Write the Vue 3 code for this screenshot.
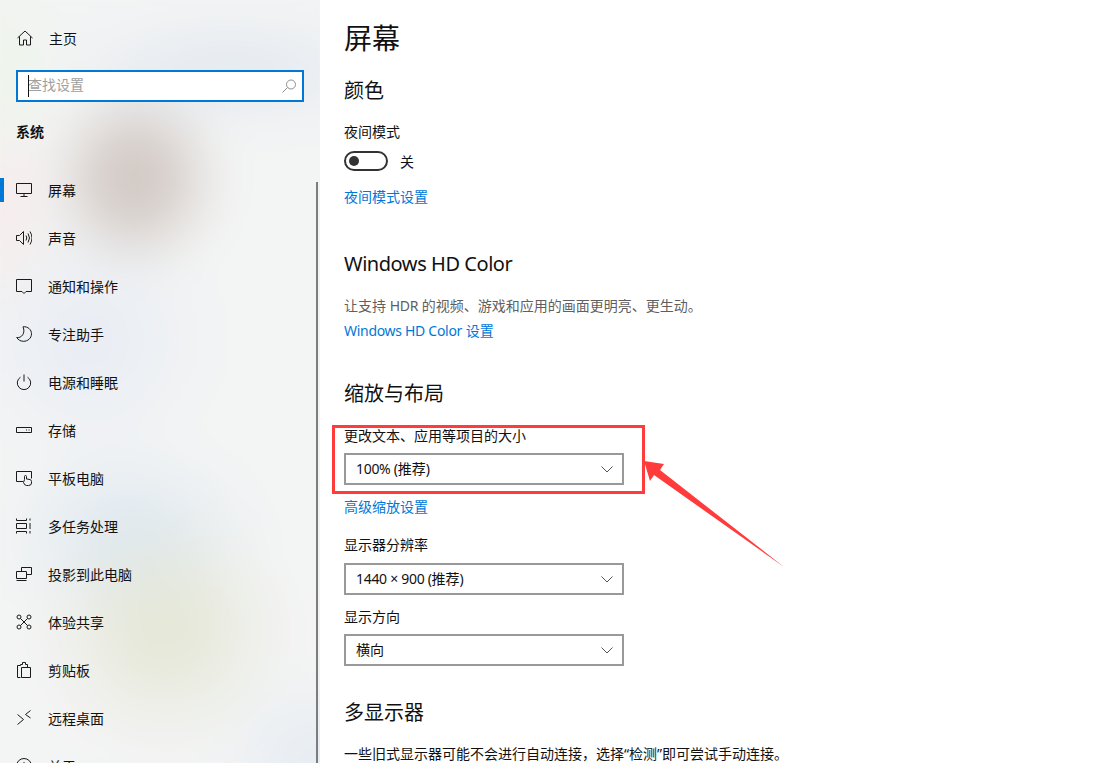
<script setup>
const navItems = [
  { label: '屏幕', active: true, paths: ['M.5 1.5h15v10H.5z', 'M8 11.5v3', 'M4.5 14.5h7'] },
  { label: '声音', paths: ['M.5 5.5h3l4-4v13l-4-4h-3z', 'M10 5.5q1.6 2.5 0 5', 'M12 3.5q3 4.5 0 9', 'M14 1.5q4 6.5 0 13'] },
  { label: '通知和操作', paths: ['M.5 1.5h15v12h-5.5l-2 2-2-2H.5z'] },
  { label: '专注助手', paths: ['M7 .8c5-.6 8.5 3 8.5 7 0 4.5-3.8 7.5-8 7.5-3 0-5.3-1.400-6.800-3.800C5.500 12.500 9.800 7 7 .8z'] },
  { label: '电源和睡眠', paths: ['M8 .5v7', 'M4.500 3.200a6.700 6.700 0 1 0 7 0'] },
  { label: '存储', paths: ['M.5 5.500h15v5H.5z', 'M10 8h1', 'M12.500 8h1'] },
  { label: '平板电脑', paths: ['M7 11.500H.5v-10h15v7', 'M8.500 9.500V6.500q0-1 1-1t1 1v2.500l3.500.5q1.500.5 1.500 2v1.500q0 2.500-3 2.500h-2q-2 0-3-3z'] },
  { label: '多任务处理', paths: ['M.5.5v2h10v-2', 'M.5 15.500v-2h10v2', 'M.5 5.500h10v5H.5z', 'M14 .5v2', 'M14 5v6', 'M14 13v2.500'] },
  { label: '投影到此电脑', paths: ['M5.500 5V1.500h10v7h-5', 'M.5 5.500h10v7H.5z', 'M.5 14.500h10'] },
  { label: '体验共享', paths: ['M4.500 4.500l7 7', 'M11.500 4.500l-7 7', 'M3 1a2 2 0 1 0 0 4 2 2 0 0 0 0-4z', 'M13 1a2 2 0 1 0 0 4 2 2 0 0 0 0-4z', 'M3 11a2 2 0 1 0 0 4 2 2 0 0 0 0-4z', 'M13 11a2 2 0 1 0 0 4 2 2 0 0 0 0-4z'] },
  { label: '剪贴板', paths: ['M4.500 15.500h-3v-12h3', 'M4.500 3.500v-1h2v-2h3v2h2v3', 'M5.500 5.500h9v10h-9z'] },
  { label: '远程桌面', paths: ['M1.500 4.500l6 5-6 5', 'M14.500.5l-5 4 5 3.500'] },
  { label: '关于', paths: ['M8 .5a7.500 7.500 0 1 0 0 15 7.500 7.500 0 0 0 0-15z', 'M8 7v5', 'M8 4v1.500'] }
]
</script>

<template>
  <div class="page">
    <aside class="sidebar">
      <div class="backdrop"></div>
      <div class="home">
        <svg class="icon" viewBox="0 0 16 16"><path d="M.5 8L8 1l7.500 7M2.500 6.500v8.500h4v-5h3v5h4V6.500" /></svg>
        <span>主页</span>
      </div>
      <div class="search">
        <span class="caret"></span>
        <span class="placeholder">查找设置</span>
        <svg class="search-icon" viewBox="0 0 14 14"><path d="M13.500 5.500a4.500 4.500 0 1 1-9 0 4.500 4.500 0 0 1 9 0zM5.500 8.500L.5 13.500" /></svg>
      </div>
      <div class="group">系统</div>
      <nav class="nav">
        <div v-for="item in navItems" :key="item.label" class="nav-item">
          <span v-if="item.active" class="indicator"></span>
          <svg class="icon" viewBox="0 0 16 16"><path v-for="d in item.paths" :key="d" :d="d" /></svg>
          <span>{{ item.label }}</span>
        </div>
      </nav>
      <div class="scrollbar"></div>
    </aside>

    <main class="content">
      <h1>屏幕</h1>
      <h2 class="color-title">颜色</h2>
      <div class="text night-label">夜间模式</div>
      <div class="toggle-row">
        <span class="toggle"><span class="knob"></span></span>
        <span class="text">关</span>
      </div>
      <a class="link night-link">夜间模式设置</a>
      <h2 class="hd-title">Windows HD Color</h2>
      <div class="text muted hd-desc">让支持 <span class="tight">HDR</span> 的视频、游戏和应用的画面更明亮、更生动。</div>
      <a class="link hd-link"><span class="tight">Windows HD Color</span> 设置</a>
      <h2 class="scale-title">缩放与布局</h2>
      <div class="text scale-label">更改文本、应用等项目的大小</div>
      <div class="select first-select">
        <span class="value"><span class="tight">100% (</span>推荐<span class="tight">)</span></span>
        <svg class="chevron" viewBox="0 0 12 7"><path d="M.5.5L6 6l5.500-5.500" /></svg>
      </div>
      <a class="link scale-link">高级缩放设置</a>
      <div class="text res-label">显示器分辨率</div>
      <div class="select res-select">
        <span class="value"><span class="tight">1440 × 900 (</span>推荐<span class="tight">)</span></span>
        <svg class="chevron" viewBox="0 0 12 7"><path d="M.5.5L6 6l5.500-5.500" /></svg>
      </div>
      <div class="text dir-label">显示方向</div>
      <div class="select dir-select">
        <span class="value">横向</span>
        <svg class="chevron" viewBox="0 0 12 7"><path d="M.5.5L6 6l5.500-5.500" /></svg>
      </div>
      <h2 class="multi-title">多显示器</h2>
      <div class="text multi-desc">一些旧式显示器可能不会进行自动连接，选择“检测”即可尝试手动连接。</div>
    </main>

    <div class="mark-box"></div>
    <svg class="mark-arrow" viewBox="0 0 1094 763"><polygon points="644,461 664,464 660,470 784,567 654,475 650,481" /></svg>
  </div>
</template>

<style>
html, body { margin: 0; background: #fff; }
</style>

<style scoped>
.page {
  position: relative;
  display: flex;
  width: 1094px;
  height: 763px;
  overflow: hidden;
  background: #fff;
  color: #111;
  font-family: "Noto Sans", "Noto Sans CJK SC", sans-serif;
  font-size: 14px;
}
.sidebar {
  position: relative;
  flex: 0 0 320px;
  box-sizing: border-box;
  height: 763px;
  padding-top: 14px;
  overflow: hidden;
  background: #f3f4f4;
}
.backdrop {
  position: absolute;
  inset: -60px;
  filter: blur(26px);
  background:
    radial-gradient(ellipse 82px 88px at 195px 238px, #d2c9c4 0, #d2c9c4 45%, rgba(210,201,196,0) 100%),
    radial-gradient(ellipse 125px 120px at 225px 690px, #e2e4d0 0, rgba(226,228,208,0) 100%),
    radial-gradient(ellipse 130px 90px at 190px 595px, #dae6f0 0, rgba(218,230,240,0) 100%),
    radial-gradient(ellipse 190px 55px at 290px 130px, #dfe6ef 0, rgba(223,230,239,0) 100%),
    radial-gradient(ellipse 60px 90px at 60px 130px, #ecf5e6 0, rgba(236,245,230,0) 100%),
    radial-gradient(ellipse 55px 110px at 60px 270px, #f7e9e8 0, rgba(247,233,232,0) 100%),
    radial-gradient(ellipse 130px 130px at 150px 400px, #e7ecf4 0, rgba(231,236,244,0) 100%),
    radial-gradient(ellipse 110px 90px at 380px 823px, #e3eaf3 0, rgba(227,234,243,0) 100%),
    #f3f4f4;
}
.home, .search, .group, .nav, .scrollbar { z-index: 1; }
.home, .group, .nav { position: relative; }
.icon {
  flex: none;
  width: 16px;
  height: 16px;
  fill: none;
  stroke: #1a1a1a;
  stroke-width: 1;
}
.home {
  display: flex;
  align-items: center;
  height: 48px;
  padding-left: 17px;
}
.home .icon { margin-right: 16px; }
.search {
  position: relative;
  display: flex;
  align-items: center;
  box-sizing: border-box;
  width: 288px;
  height: 32px;
  margin: 8px 0 0 16px;
  padding: 0 0 4px 10px;
  border: 2px solid #0078d7;
  background: #fff;
}
.caret {
  position: absolute;
  left: 10px;
  top: 3px;
  width: 1px;
  height: 22px;
  background: #111;
}
.placeholder { color: #a0a0a0; }
.search-icon {
  position: absolute;
  right: 6px;
  top: 7px;
  width: 14px;
  height: 14px;
  fill: none;
  stroke: #8f8f8f;
}
.group {
  margin: 20px 0 0 16px;
  height: 20px;
  line-height: 20px;
  font-weight: 700;
}
.nav { margin-top: 24px; }
.nav-item {
  position: relative;
  display: flex;
  align-items: center;
  height: 48px;
  padding-left: 16px;
}
.nav-item .icon { margin-right: 16px; }
.indicator {
  position: absolute;
  left: 0;
  top: 12px;
  width: 4px;
  height: 24px;
  background: #0078d7;
}
.scrollbar {
  position: absolute;
  top: 182px;
  bottom: 0;
  right: 2px;
  width: 2px;
  background: #7d7d7d;
}
.content {
  flex: 1;
  box-sizing: border-box;
  padding: 18px 0 0 24px;
  min-width: 0;
}
h1, h2 { margin: 0; font-weight: 400; }
h1 { font-size: 28px; line-height: 40px; }
h2 { font-size: 20px; line-height: 28px; }
.text, .link { display: block; height: 20px; line-height: 20px; white-space: nowrap; }
.link { color: #0078d7; }
.muted { color: #5f5f5f; }
.tight { letter-spacing: -.3px; }
.color-title { margin-top: 19px; }
.night-label { margin-top: 17px; }
.toggle-row { display: flex; align-items: center; gap: 12px; margin-top: 9px; height: 20px; }
.toggle-row .text { margin-top: 2px; }
.toggle {
  display: flex;
  align-items: center;
  box-sizing: border-box;
  width: 44px;
  height: 20px;
  padding-left: 3px;
  border: 2px solid #333;
  border-radius: 10px;
}
.knob { width: 10px; height: 10px; border-radius: 50%; background: #333; }
.night-link { margin-top: 16px; }
.hd-title { margin-top: 43px; letter-spacing: -.45px; }
.hd-desc { margin-top: 18px; }
.hd-link { margin-top: 5px; }
.scale-title { margin-top: 39px; }
.scale-label { margin-top: 18px; }
.select {
  display: flex;
  align-items: center;
  justify-content: space-between;
  box-sizing: border-box;
  width: 280px;
  height: 32px;
  padding: 0 9px 0 10px;
  border: 2px solid #999;
  background: #fff;
}
.value { padding-bottom: 2px; }
.chevron { width: 12px; height: 7px; fill: none; stroke: #555; }
.first-select { margin-top: 7px; }
.scale-link { margin-top: 12px; }
.res-label { margin-top: 18px; }
.res-select { margin-top: 8px; }
.dir-label { margin-top: 12px; }
.dir-select { margin-top: 7px; }
.multi-title { margin-top: 33px; }
.multi-desc { margin-top: 17px; }
.mark-box {
  position: absolute;
  left: 332px;
  top: 425px;
  width: 313px;
  height: 69px;
  box-sizing: border-box;
  border: 3px solid #ff3b3b;
}
.mark-arrow {
  position: absolute;
  left: 0;
  top: 0;
  width: 1094px;
  height: 763px;
  fill: #ff3b3b;
}
</style>
